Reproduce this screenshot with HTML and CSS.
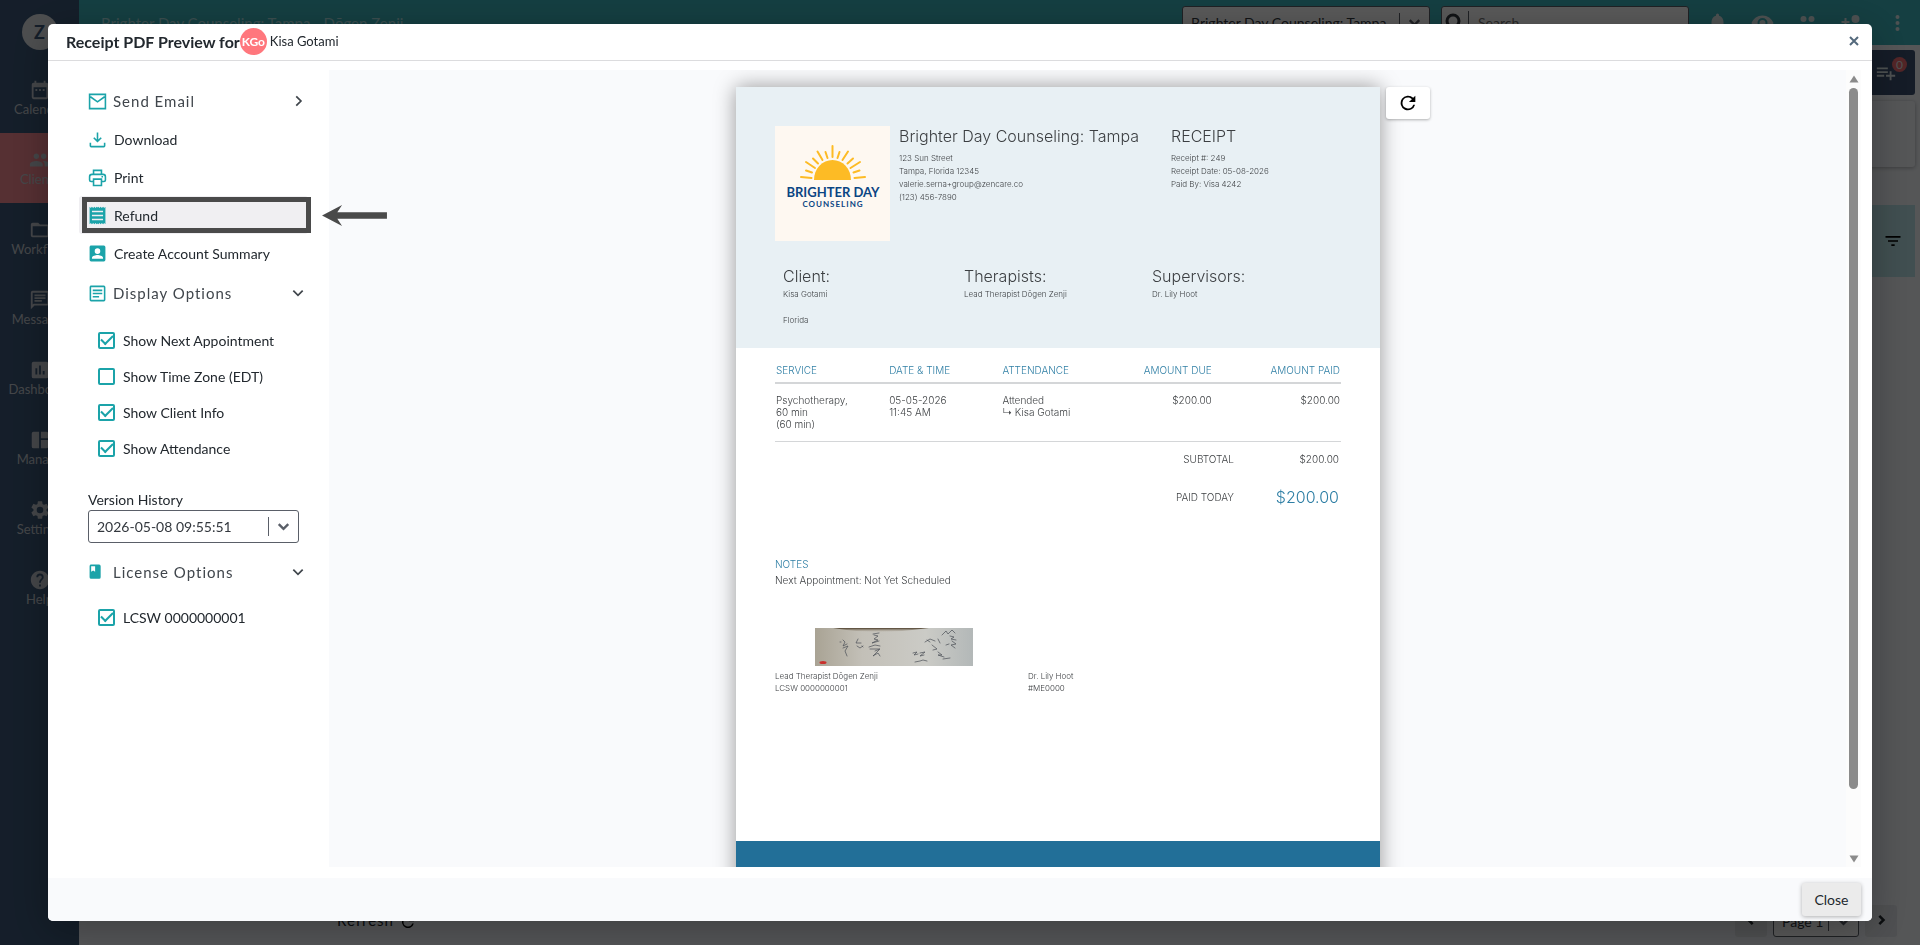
FILE: index.html
```html
<!DOCTYPE html>
<html lang="en">
<head>
  <meta charset="UTF-8" />
  <meta name="viewport" content="width=device-width, initial-scale=1.0"/>
  <title>Receipt PDF Preview</title>
  <link rel="stylesheet" href="styles.css">
</head>
<body>
  <div class="app">
    <nav class="sidenav">
      <div class="brand">Z</div>
      <a href="#" class="nav-item">
        <svg viewBox="0 0 24 24"><path d="M19 4h-1V2h-2v2H8V2H6v2H5a2 2 0 0 0-2 2v14a2 2 0 0 0 2 2h14a2 2 0 0 0 2-2V6a2 2 0 0 0-2-2zm0 16H5V9h14v11zM7 11h2v2H7zm4 0h2v2h-2zm4 0h2v2h-2z"/></svg>
        Calendar
      </a>
      <a href="#" class="nav-item active">
        <svg viewBox="0 0 24 24"><path d="M16 11c1.66 0 3-1.34 3-3s-1.34-3-3-3-3 1.34-3 3 1.34 3 3 3zm-8 0c1.66 0 3-1.34 3-3S9.66 5 8 5 5 6.340 5 8s1.340 3 3 3zm0 2c-2.330 0-7 1.170-7 3.500V19h14v-2.500C15 14.170 10.330 13 8 13zm8 0c-.290 0-.620.020-.970.050 1.160.840 1.970 1.970 1.970 3.450V19h6v-2.500c0-2.330-4.670-3.500-7-3.500z"/></svg>
        Clients
      </a>
      <a href="#" class="nav-item">
        <svg viewBox="0 0 24 24"><path d="M20 6h-8l-2-2H4a2 2 0 0 0-2 2v12a2 2 0 0 0 2 2h16a2 2 0 0 0 2-2V8a2 2 0 0 0-2-2zm0 12H4V8h16v10z"/></svg>
        Workflow
      </a>
      <a href="#" class="nav-item">
        <svg viewBox="0 0 24 24"><path d="M4 2a2 2 0 0 0-2 2v18l4-4h14a2 2 0 0 0 2-2V4a2 2 0 0 0-2-2H4zm0 2h16v12H5l-1 1V4zm2 8h8v2H6zm0-3h12v2H6zm0-3h12v2H6z"/></svg>
        Messages
      </a>
      <a href="#" class="nav-item">
        <svg viewBox="0 0 24 24"><path d="M19 3H5a2 2 0 0 0-2 2v14a2 2 0 0 0 2 2h14a2 2 0 0 0 2-2V5a2 2 0 0 0-2-2zM9 17H7v-7h2v7zm4 0h-2V7h2v10zm4 0h-2v-4h2v4z"/></svg>
        Dashboard
      </a>
      <a href="#" class="nav-item">
        <svg viewBox="0 0 24 24"><path d="M11 21H5a2 2 0 0 1-2-2V5a2 2 0 0 1 2-2h6v18zm2 0h6a2 2 0 0 0 2-2v-7h-8v9zm8-11V5a2 2 0 0 0-2-2h-6v7h8z"/></svg>
        Manage
      </a>
      <a href="#" class="nav-item">
        <svg viewBox="0 0 24 24"><path d="M19.140 12.940c.040-.300.060-.610.060-.940s-.020-.640-.070-.940l2.030-1.580a.490.490 0 0 0 .120-.610l-1.920-3.320a.488.488 0 0 0-.590-.220l-2.390.960c-.500-.380-1.030-.700-1.620-.940l-.360-2.540a.484.484 0 0 0-.480-.410h-3.840a.474.474 0 0 0-.470.410l-.360 2.540c-.590.240-1.130.570-1.620.940l-2.390-.960a.481.481 0 0 0-.590.220L2.740 8.870a.471.471 0 0 0 .120.610l2.030 1.580c-.050.300-.090.630-.090.940s.020.640.070.940l-2.030 1.580a.490.490 0 0 0-.120.610l1.920 3.320c.120.220.370.290.590.220l2.390-.960c.500.380 1.030.700 1.620.940l.360 2.540c.050.240.240.410.480.410h3.840c.240 0 .440-.170.470-.410l.360-2.540c.590-.240 1.130-.560 1.620-.940l2.390.960c.220.080.470 0 .590-.220l1.920-3.320a.471.471 0 0 0-.120-.610l-2.010-1.580zM12 15.600A3.600 3.600 0 1 1 12 8.400a3.600 3.600 0 0 1 0 7.200z"/></svg>
        Settings
      </a>
      <a href="#" class="nav-item">
        <svg viewBox="0 0 24 24"><path d="M12 2C6.480 2 2 6.480 2 12s4.480 10 10 10 10-4.480 10-10S17.520 2 12 2zm1 17h-2v-2h2v2zm2.070-7.750l-.900.920C13.450 12.900 13 13.500 13 15h-2v-.500c0-1.100.450-2.100 1.170-2.830l1.240-1.260c.370-.360.590-.860.590-1.410a2 2 0 0 0-4 0H8a4 4 0 0 1 8 0c0 .880-.360 1.680-.930 2.250z"/></svg>
        Help
      </a>
    </nav>

    <div class="main">
      <header class="topbar">
        <div class="topbar-title">Brighter Day Counseling: Tampa - Dōgen Zenji</div>
        <div class="select-box location">
          <select aria-label="Location"><option>Brighter Day Counseling: Tampa</option></select>
          <svg class="chevron" viewBox="0 0 24 24"><path d="M6 9l6 6 6-6"/></svg>
        </div>
        <div class="search">
          <svg viewBox="0 0 24 24"><circle cx="10" cy="10" r="6"/><path d="M15 15l6 6"/></svg>
          <input type="text" placeholder="Search" aria-label="Search">
        </div>
        <div class="topbar-icons">
          <svg viewBox="0 0 24 24"><path d="M12 22a2 2 0 0 0 2-2h-4a2 2 0 0 0 2 2zm6-6v-5c0-3.070-1.640-5.640-4.500-6.320V4a1.500 1.500 0 0 0-3 0v.680C7.630 5.360 6 7.920 6 11v5l-2 2v1h16v-1l-2-2z"/></svg>
          <svg viewBox="0 0 24 24"><path d="M12 4.500C7 4.500 2.730 7.610 1 12c1.730 4.390 6 7.500 11 7.500s9.270-3.110 11-7.500c-1.730-4.390-6-7.500-11-7.500zM12 17a5 5 0 1 1 0-10 5 5 0 0 1 0 10zm0-8a3 3 0 1 0 0 6 3 3 0 0 0 0-6z"/></svg>
          <svg viewBox="0 0 24 24"><circle cx="8" cy="8" r="3"/><circle cx="16" cy="8" r="3"/><circle cx="8" cy="17" r="3"/><circle cx="16" cy="17" r="3"/></svg>
          <svg viewBox="0 0 24 24"><path d="M15 12a4 4 0 1 0 0-8 4 4 0 0 0 0 8zm-9-2V7H4v3H1v2h3v3h2v-3h3v-2H6zm9 4c-2.670 0-8 1.340-8 4v2h16v-2c0-2.660-5.330-4-8-4z"/></svg>
          <svg viewBox="0 0 24 24"><circle cx="12" cy="6" r="2"/><circle cx="12" cy="12" r="2"/><circle cx="12" cy="18" r="2"/></svg>
        </div>
      </header>
      <div class="content">
        <div class="toolbar">
          <svg viewBox="0 0 24 24"><path d="M14 10H2v2h12v-2zm0-4H2v2h12V6zm4 8v-4h-2v4h-4v2h4v4h2v-4h4v-2h-4zM2 16h8v-2H2v2z"/></svg>
          <span class="count">0</span>
        </div>
        <div class="panel"></div>
        <div class="filter-row">
          <svg viewBox="0 0 24 24"><path d="M10 18h4v-2h-4v2zM3 6v2h18V6H3zm3 7h12v-2H6v2z"/></svg>
        </div>
        <div class="list-footer">
          <a href="#" class="refresh-link">Refresh
            <svg viewBox="0 0 24 24"><path d="M17.650 6.350A8 8 0 1 0 19.730 14h-2.080A6 6 0 1 1 12 6c1.660 0 3.140.690 4.220 1.780L13 11h7V4l-2.350 2.350z"/></svg>
          </a>
          <button class="page-btn" aria-label="Previous page"><svg class="chevron" viewBox="0 0 24 24"><path d="M14 7l-5 5 5 5"/></svg></button>
          <div class="select-box pager">
            <select aria-label="Page"><option>Page 1</option></select>
            <svg class="chevron" viewBox="0 0 24 24"><path d="M6 9l6 6 6-6"/></svg>
          </div>
          <button class="page-btn" aria-label="Next page"><svg class="chevron" viewBox="0 0 24 24"><path d="M10 7l5 5-5 5"/></svg></button>
        </div>
      </div>
    </div>
  </div>

  <div class="backdrop"></div>

  <div class="modal">
    <div class="modal-header">
      <h1>Receipt PDF Preview for</h1>
      <span class="avatar">KGo</span>
      <span class="client-name">Kisa Gotami</span>
      <button class="close-x" aria-label="Close dialog"><svg viewBox="0 0 12 12"><path d="M2 2l8 8M10 2l-8 8"/></svg></button>
    </div>

    <div class="modal-body">
      <aside class="options">
        <button class="option section">
          <svg class="icon outline" viewBox="0 0 24 24"><path d="M2 3h20v18H2zM3 6l9 6.500L21 6"/></svg>
          <span>Send Email</span>
          <svg class="chevron" viewBox="0 0 24 24"><path d="M9 4l8 8-8 8"/></svg>
        </button>
        <button class="option">
          <svg class="icon" viewBox="0 0 24 24"><path d="M11 3h2v9l3-3 1.400 1.400L12 15.900l-5.400-5.500L8 9l3 3V3zM2 16h2v4h16v-4h2v4a2 2 0 0 1-2 2H4a2 2 0 0 1-2-2v-4z"/></svg>
          <span>Download</span>
        </button>
        <button class="option">
          <svg class="icon outline" viewBox="0 0 24 24"><path d="M7 8V3h10v5M7 17H4a2 2 0 0 1-2-2v-4a3 3 0 0 1 3-3h14a3 3 0 0 1 3 3v4a2 2 0 0 1-2 2h-3M7 14h10v8H7z"/><path d="M17 11h2"/></svg>
          <span>Print</span>
        </button>
        <button class="option selected">
          <svg class="icon" viewBox="0 0 24 24"><path fill-rule="evenodd" d="M2 1l1.500 1.500L5 1l1.500 1.500L8 1l1.500 1.500L11 1l1 1 1-1 1.500 1.500L16 1l1.500 1.500L19 1l1.500 1.500L22 1v22l-1.500-1.500L19 23l-1.500-1.500L16 23l-1.500-1.500L13 23l-1-1-1 1-1.500-1.500L8 23l-1.500-1.500L5 23l-1.500-1.500L2 23zM5 6v2h14V6zm0 5v2h14v-2zm0 5v2h14v-2z"/></svg>
          <span>Refund</span>
        </button>
        <button class="option">
          <svg class="icon" viewBox="0 0 24 24"><path fill-rule="evenodd" d="M4 2h16a2 2 0 0 1 2 2v16a2 2 0 0 1-2 2H4a2 2 0 0 1-2-2V4c0-1.100.900-2 2-2zm8 3.500a3.500 3.500 0 1 0 0 7 3.500 3.500 0 0 0 0-7zM5 18.500h14v-1c0-2.300-4.700-3.500-7-3.500s-7 1.200-7 3.500v1z"/></svg>
          <span>Create Account Summary</span>
        </button>
        <button class="option section display">
          <svg class="icon" viewBox="0 0 24 24"><path fill-rule="evenodd" d="M4 2h16a2 2 0 0 1 2 2v16a2 2 0 0 1-2 2H4a2 2 0 0 1-2-2V4c0-1.100.900-2 2-2zm0 2v16h16V4zm2 3h12v2H6zm0 4h12v2H6zm0 4h8v2H6z"/></svg>
          <span>Display Options</span>
          <svg class="chevron" viewBox="0 0 24 24"><path d="M4 8l8 8 8-8"/></svg>
        </button>
        <div class="checks">
          <label><input type="checkbox" checked>Show Next Appointment</label>
          <label><input type="checkbox">Show Time Zone (EDT)</label>
          <label><input type="checkbox" checked>Show Client Info</label>
          <label><input type="checkbox" checked>Show Attendance</label>
        </div>
        <div class="version">
          <label for="version">Version History</label>
          <div class="select-box">
            <select id="version"><option>2026-05-08 09:55:51</option></select>
            <svg class="chevron" viewBox="0 0 24 24"><path d="M6 9l6 6 6-6"/></svg>
          </div>
        </div>
        <button class="option section">
          <svg class="icon" viewBox="0 0 24 24"><path fill-rule="evenodd" d="M4 2h10a2 2 0 0 1 2 2v14a2 2 0 0 1-2 2H4a2 2 0 0 1-2-2V4c0-1.100.900-2 2-2zm0 2v7l2.500-1.500L9 11V4z"/></svg>
          <span>License Options</span>
          <svg class="chevron" viewBox="0 0 24 24"><path d="M4 8l8 8 8-8"/></svg>
        </button>
        <div class="checks">
          <label><input type="checkbox" checked>LCSW 0000000001</label>
        </div>
        <!-- callout pointing at the refund action -->
        <div class="callout"></div>
        <svg class="callout-arrow" viewBox="0 0 68 22"><path d="M0 11L21 0l-5 7.500h52v7H16L21 22z"/></svg>
      </aside>

      <div class="preview">
        <div class="preview-scroll">
          <div class="sheet">
            <div class="sheet-head">
              <div class="practice">
                <svg class="logo" viewBox="0 0 115 115">
                  <rect width="115" height="115" fill="#fef8f1"/>
                  <path d="M39 54a18.500 20 0 0 1 37 0z" fill="#fdbb25"/>
                  <g stroke="#fdbb25" stroke-width="2" stroke-linecap="round">
                    <path d="M57.500 20v11M50.500 26l2 6M64.500 26l-2 6M42.500 25.500l5 8.500M73 25.500l-5.500 8.500M38 32.500l5 5M78 32.500l-5.500 5M31 36l9 6M85 36l-9.500 6M31 44.500l6 2M84.500 44.500l-6 2M26 51l10.500 1M90 51l-10.500 1"/>
                  </g>
                  <text x="58" y="71" class="logo-name">BRIGHTER DAY</text>
                  <text x="58" y="81" class="logo-sub">COUNSELING</text>
                </svg>
                <div class="address">
                  <h2>Brighter Day Counseling: Tampa</h2>
                  <p>123 Sun Street</p>
                  <p>Tampa, Florida 12345</p>
                  <p>valerie.serna+group@zencare.co</p>
                  <p>(123) 456-7890</p>
                </div>
                <div class="receipt">
                  <h2>RECEIPT</h2>
                  <p>Receipt #: 249</p>
                  <p>Receipt Date: 05-08-2026</p>
                  <p>Paid By: Visa 4242</p>
                </div>
              </div>
              <div class="people">
                <div><h2>Client:</h2><p>Kisa Gotami</p><p class="state">Florida</p></div>
                <div><h2>Therapists:</h2><p>Lead Therapist Dōgen Zenji</p></div>
                <div><h2>Supervisors:</h2><p>Dr. Lily Hoot</p></div>
              </div>
            </div>
            <table class="services">
              <thead>
                <tr><th>SERVICE</th><th>DATE &amp; TIME</th><th>ATTENDANCE</th><th class="num due">AMOUNT DUE</th><th class="num">AMOUNT PAID</th></tr>
              </thead>
              <tbody>
                <tr><td>Psychotherapy,<br>60 min<br>(60 min)</td><td>05-05-2026<br>11:45 AM</td><td>Attended<br>↳ Kisa Gotami</td><td class="num due">$200.00</td><td class="num">$200.00</td></tr>
              </tbody>
            </table>
            <div class="totals">
              <span>SUBTOTAL</span><span>$200.00</span>
              <span>PAID TODAY</span><span class="paid">$200.00</span>
            </div>
            <div class="notes">
              <h3>NOTES</h3>
              <p>Next Appointment: Not Yet Scheduled</p>
            </div>
            <div class="signatures">
              <div>
                <svg class="signature" viewBox="0 0 158 38">
                  <defs>
                    <linearGradient id="paper" x1="0" y1="0" x2="1" y2="0">
                      <stop offset="0" stop-color="#a9a394"/><stop offset=".3" stop-color="#c3c0b8"/><stop offset=".7" stop-color="#cbcbc6"/><stop offset="1" stop-color="#b3b8b8"/>
                    </linearGradient>
                    <linearGradient id="fold" x1="0" y1="0" x2="0" y2="1">
                      <stop offset="0" stop-color="#4a3b28"/><stop offset="1" stop-color="#a9a08f" stop-opacity="0"/>
                    </linearGradient>
                  </defs>
                  <rect width="158" height="38" fill="url(#paper)"/>
                  <path d="M18 0h96Q84 4 66 4 40 4 18 0z" fill="url(#fold)"/>
                  <ellipse cx="8" cy="34.500" rx="3.500" ry="1.500" fill="#c9302c"/>
                  <g fill="none" stroke="#4a4f56" stroke-width=".7" stroke-linecap="round">
                    <path d="M25 14h1M28 12l2 2-2 4 4-2M28 20l5-2-3 5 2 5M43 11l-2 4h5M42 18l3 2 3-2M47 18l1 1M58 6l6-1M59 7l4 1-4 3 4 1-6 3 7-2M54 19l6-2 5 1M55 21h10l-5 2M64 22l-6 6 5-3 2 3M110 14l5-3 5 2M112 12l3 2M123 11l2 4M127 7l4-4 2 3 4-4 3 3M135 8l4 1-3 2 5 1M117 17l5 4-4 1M131 17l3-1M137 13l4 3-5 1 4 3M98 25l4-1-3 3 4-1M105 25l5-1-5 4 4-1M100 34l5-1 3-1 4 1M123 24l4 3h-4l6 2M128 31l7-1"/>
                  </g>
                </svg>
                <p>Lead Therapist Dōgen Zenji</p>
                <p>LCSW 0000000001</p>
              </div>
              <div>
                <p>Dr. Lily Hoot</p>
                <p>#ME0000</p>
              </div>
            </div>
            <div class="sheet-foot"></div>
          </div>
          <button class="reload" aria-label="Reload preview"><svg viewBox="0 0 24 24"><path d="M17.650 6.350A8 8 0 1 0 19.730 14h-2.080A6 6 0 1 1 12 6c1.660 0 3.140.690 4.220 1.780L13 11h7V4l-2.350 2.350z"/></svg></button>
        </div>
        <div class="scrollbar">
          <svg viewBox="0 0 10 8"><path d="M5 0.500L9.500 7.500h-9z"/></svg>
          <div class="track"><div class="thumb"></div></div>
          <svg viewBox="0 0 10 8"><path d="M5 7.500L0.500 0.500h9z"/></svg>
        </div>
      </div>
    </div>

    <div class="modal-footer">
      <button class="close-btn">Close</button>
    </div>
  </div>
</body>
</html>
```

FILE: styles.css
```css
* {
  box-sizing: border-box;
}

body {
  margin: 0;
  font-family: Lato, "Liberation Sans", sans-serif;
  font-size: 14px;
  color: #22282e;
}

h1, h2, h3, p {
  margin: 0;
}

button, input, select {
  font: inherit;
  color: inherit;
}

button {
  border: none;
  background: none;
  padding: 0;
  cursor: pointer;
}

.chevron {
  width: 20px;
  height: 20px;
  fill: none;
  stroke: currentColor;
  stroke-width: 3;
}

/* page behind the dialog */
.app {
  display: flex;
  height: 100vh;
  overflow: hidden;
  background: #f3f6fa;
}

.sidenav {
  width: 79px;
  background: #3c5878;
  color: #c4c9d0;
  display: flex;
  flex-direction: column;
  align-items: center;
}

.brand {
  width: 36px;
  height: 36px;
  margin: 14px 0 13px;
  border-radius: 50%;
  background: #dde0e3;
  color: #3c5878;
  font-size: 18px;
  font-weight: bold;
  line-height: 36px;
  text-align: center;
}

.nav-item {
  width: 100%;
  height: 70px;
  padding-top: 16px;
  display: flex;
  flex-direction: column;
  align-items: center;
  color: inherit;
  font-size: 13px;
  line-height: 16px;
  text-decoration: none;
}

.nav-item svg {
  width: 22px;
  height: 22px;
  fill: currentColor;
}

.nav-item.active {
  background: #f68992;
}

.main {
  flex: 1;
  display: flex;
  flex-direction: column;
}

.topbar {
  height: 45px;
  padding: 6px 10px 6px 22px;
  display: flex;
  align-items: center;
  background: #3cb4bc;
}

.topbar-title {
  flex: 1;
  color: #a9dfe2;
  font-size: 15px;
}

.select-box {
  position: relative;
  border: 1px solid #5a5f68;
  border-radius: 3px;
  background: #fff;
  color: #33383e;
}

.select-box select {
  appearance: none;
  width: 100%;
  height: 100%;
  padding: 0 30px 0 8px;
  border: none;
  background: none;
}

.select-box .chevron {
  position: absolute;
  top: 6px;
  right: 0;
  width: 30px;
  height: 19px;
  border-left: 1px solid #5a5f68;
  color: #5a5f68;
  pointer-events: none;
}

.location {
  width: 248px;
  height: 33px;
}

.search {
  width: 248px;
  height: 33px;
  margin: 0 16px 0 11px;
  display: flex;
  align-items: center;
  border: 1px solid #5a5f68;
  border-radius: 3px;
  background: #fff;
}

.search svg {
  width: 27px;
  height: 24px;
  border-right: 1px solid #5a5f68;
  fill: none;
  stroke: #33383e;
  stroke-width: 3;
}

.search input {
  flex: 1;
  min-width: 0;
  border: none;
  background: none;
  padding: 0 9px;
}

.topbar-icons {
  display: flex;
  gap: 20px;
}

.topbar-icons svg {
  width: 25px;
  height: 24px;
  fill: #dde8ea;
}

.content {
  flex: 1;
  display: flex;
  flex-direction: column;
  padding: 5px 5px 8px;
}

.toolbar {
  height: 45px;
  display: flex;
  justify-content: flex-end;
  align-items: center;
  padding-right: 8px;
  border-radius: 3px;
  background: #3c5070;
  color: #dde8ea;
}

.toolbar svg {
  width: 22px;
  height: 22px;
  fill: currentColor;
}

.count {
  width: 15px;
  height: 15px;
  margin: 0 0 16px -5px;
  border-radius: 50%;
  background: #ec6a70;
  font-size: 12px;
  line-height: 15px;
  text-align: center;
}

.panel {
  height: 66px;
  margin-top: 6px;
  border-radius: 3px;
  background: #f3f6fa;
  box-shadow: 0 1px 4px rgba(0, 0, 0, 0.3);
}

.filter-row {
  height: 72px;
  margin-top: 38px;
  display: flex;
  justify-content: flex-end;
  align-items: center;
  padding-right: 12px;
  background: #b9e2e7;
}

.filter-row svg {
  width: 20px;
  height: 24px;
}

.list-footer {
  display: flex;
  align-items: center;
  gap: 6px;
  margin-top: auto;
  padding: 0 18px 0 253px;
}

.refresh-link {
  flex: 1;
  color: inherit;
  font-size: 15px;
  letter-spacing: 1px;
  text-decoration: none;
}

.refresh-link svg {
  width: 18px;
  height: 18px;
  vertical-align: middle;
}

.page-btn {
  width: 32px;
  height: 32px;
  border-radius: 3px;
  background: #e2e5e9;
}

.pager {
  width: 86px;
  height: 32px;
}

.backdrop {
  position: fixed;
  inset: 0;
  background: rgba(0, 0, 0, 0.65);
}

/* dialog */
.modal {
  position: fixed;
  inset: 24px 48px;
  display: flex;
  flex-direction: column;
  border-radius: 5px;
  background: #fff;
  box-shadow: 0 8px 40px rgba(0, 0, 0, 0.3);
  overflow: hidden;
}

.modal-header {
  height: 37px;
  padding: 0 12px 2px 18px;
  display: flex;
  align-items: center;
  border-bottom: 1px solid #dcdcde;
}

.modal-header h1 {
  font-size: 16px;
  font-weight: bold;
}

.avatar {
  width: 27px;
  height: 27px;
  border-radius: 50%;
  background: #ff777d;
  color: #fff;
  font-size: 12px;
  font-weight: bold;
  line-height: 27px;
  text-align: center;
}

.client-name {
  margin-left: 3px;
  font-size: 13px;
}

.close-x {
  width: 12px;
  height: 12px;
  margin-left: auto;
  display: flex;
}

.close-x svg {
  width: 12px;
  height: 12px;
  stroke: #54697c;
  stroke-width: 2;
}

.modal-body {
  flex: 1;
  min-height: 0;
  display: flex;
  padding: 9px 11px 11px 0;
}

.options {
  position: relative;
  width: 281px;
  padding: 12px 21px 0 31px;
}

.option {
  width: 100%;
  height: 38px;
  padding: 0 10px 0 9px;
  display: flex;
  align-items: center;
  gap: 7px;
  border-radius: 3px;
  text-align: left;
}

.option .icon {
  width: 19px;
  height: 19px;
  fill: #1ba3a9;
}

.option .icon.outline {
  fill: none;
  stroke: #1ba3a9;
  stroke-width: 2;
}

.option .chevron {
  width: 14px;
  height: 14px;
  margin-left: auto;
}

.option.section {
  gap: 6px;
  padding-right: 3px;
  color: #40464c;
  font-size: 15px;
  letter-spacing: 1px;
}

.option.display {
  height: 42px;
}

.option.selected {
  background: #f0eff2;
}

.checks {
  padding: 8px 0 0 19px;
}

.checks label {
  height: 36px;
  display: flex;
  align-items: center;
  gap: 8px;
}

.checks input {
  appearance: none;
  width: 17px;
  height: 17px;
  margin: 0;
  border: 2px solid #1ba3a9;
  border-radius: 2px;
  display: grid;
  place-items: center;
}

.checks input:checked::before {
  content: "";
  width: 10px;
  height: 5px;
  margin-bottom: 3px;
  border-left: 2px solid #1ba3a9;
  border-bottom: 2px solid #1ba3a9;
  transform: rotate(-45deg);
}

.version {
  padding: 24px 9px 10px;
}

.version .select-box {
  height: 33px;
}

.version label {
  display: block;
  line-height: 20px;
}

.callout {
  position: absolute;
  top: 127px;
  left: 34px;
  width: 229px;
  height: 36px;
  border: 5px solid #4a4a4a;
}

.callout-arrow {
  position: absolute;
  z-index: 1;
  top: 135px;
  left: 273px;
  width: 67px;
  height: 21px;
  fill: #4a4a4a;
}

/* preview pane */
.preview {
  flex: 1;
  display: flex;
  overflow: hidden;
  background: #f9fafc;
}

.preview-scroll {
  flex: 1;
  display: flex;
  justify-content: center;
  align-items: flex-start;
  gap: 6px;
  padding: 17px 9px 0 0;
}

.sheet {
  width: 644px;
  background: #fff;
  box-shadow: 0 0 20px rgba(0, 0, 0, 0.4);
  color: #3c3f42;
  font-family: Inter, "Liberation Sans", sans-serif;
  font-size: 10px;
  font-weight: 300;
  line-height: 12px;
}

.sheet h2 {
  font-size: 16px;
  font-weight: 300;
  line-height: 20px;
}

.sheet-head {
  height: 261px;
  padding: 39px 39px 0;
  background: #e8f0f4;
  font-size: 8px;
  line-height: 13px;
}

.practice {
  display: flex;
  gap: 9px;
}

.practice h2 {
  margin-bottom: 6px;
}

.logo {
  width: 115px;
  height: 115px;
}

.logo-name,
.logo-sub {
  fill: #0b4583;
  font-family: Lato, sans-serif;
  font-weight: bold;
  text-anchor: middle;
}

.logo-name {
  font-size: 13px;
}

.logo-sub {
  font-size: 8px;
  letter-spacing: 1px;
}

.address {
  width: 263px;
}

.people {
  display: grid;
  grid-template-columns: 181px 188px 1fr;
  padding: 25px 0 0 8px;
}

.people h2 {
  margin-bottom: 2px;
}

.state {
  margin-top: 13px;
}

.services {
  width: 566px;
  margin: 14px 39px 0;
  border-collapse: collapse;
  table-layout: fixed;
}

.services th {
  height: 21px;
  padding: 0 1px 4px;
  border-bottom: 2px solid #d4d6d8;
  color: #2f7fa5;
  font-weight: 300;
  text-align: left;
}

.services td {
  height: 58px;
  padding: 10px 1px 0;
  border-bottom: 1px solid #d4d6d8;
  vertical-align: top;
}

.services .num {
  text-align: right;
}

.services .due {
  padding-right: 16px;
}

.totals {
  display: grid;
  grid-template-columns: 1fr 105px;
  row-gap: 18px;
  align-items: center;
  padding: 7px 41px 0;
  line-height: 20px;
  text-align: right;
}

.paid {
  color: #2f7fa5;
  font-size: 16px;
}

.notes {
  padding: 49px 39px 0;
  line-height: 16px;
}

.notes h3 {
  color: #2f7fa5;
  font-size: 10px;
  font-weight: 300;
}

.signatures {
  display: grid;
  grid-template-columns: 253px 1fr;
  align-items: end;
  padding: 40px 39px 0;
  font-size: 8px;
  line-height: 12px;
}

.signature {
  display: block;
  width: 158px;
  height: 38px;
  margin: 0 0 4px 40px;
}

.sheet-foot {
  height: 60px;
  margin-top: 147px;
  background: #226f98;
}

.reload {
  width: 44px;
  height: 32px;
  border-radius: 3px;
  background: #fff;
  box-shadow: 0 1px 3px rgba(0, 0, 0, 0.3);
}

.reload svg {
  width: 22px;
  height: 22px;
  vertical-align: middle;
}

.scrollbar {
  width: 15px;
  padding: 5px 3px 4px;
  display: flex;
  flex-direction: column;
  align-items: center;
  gap: 5px;
  background: #fcfcfc;
}

.scrollbar svg {
  width: 10px;
  height: 8px;
  fill: #8b8b8b;
}

.track {
  flex: 1;
  width: 9px;
}

.thumb {
  height: 92%;
  border-radius: 5px;
  background: #8b8b8b;
}

.modal-footer {
  height: 43px;
  padding: 0 11px;
  display: flex;
  justify-content: flex-end;
  align-items: center;
  background: #f9fafc;
}

.close-btn {
  width: 59px;
  height: 33px;
  border-radius: 3px;
  background: #ebebeb;
  box-shadow: 0 1px 4px rgba(0, 0, 0, 0.3);
}
```
